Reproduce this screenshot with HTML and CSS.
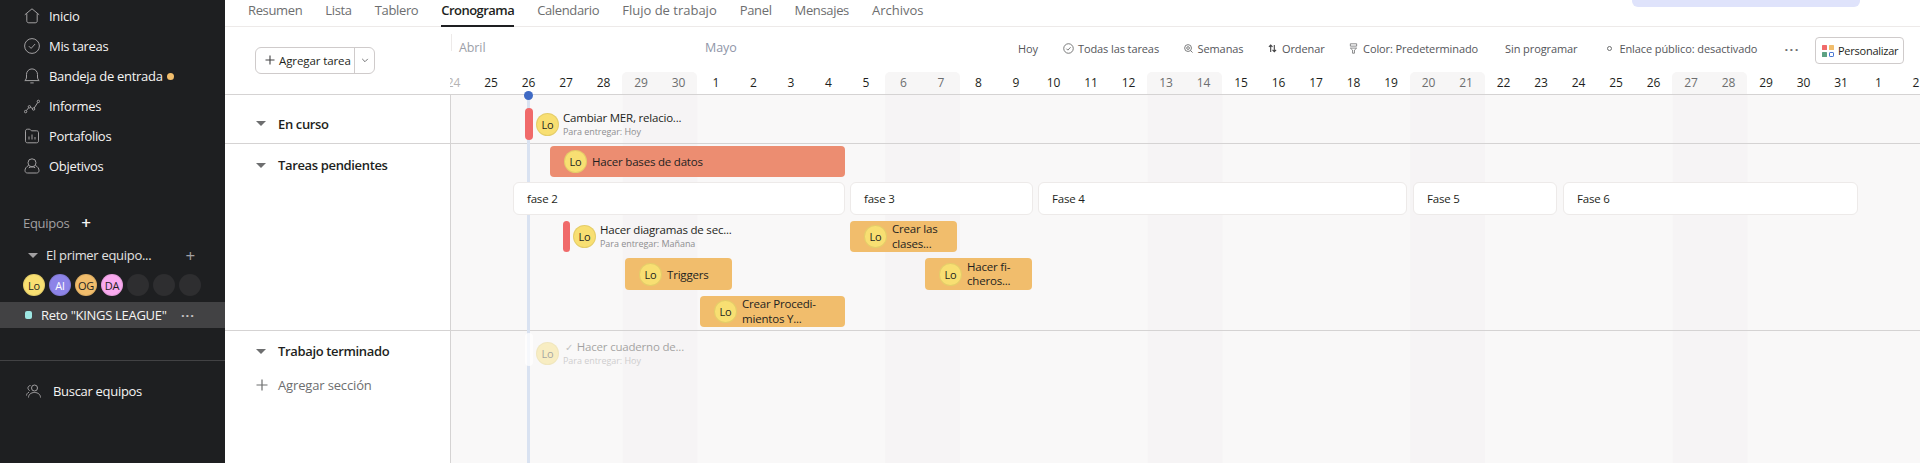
FILE: index.html
```html
<!DOCTYPE html>
<html lang="es">
<head>
<meta charset="utf-8">
<title>Reto KINGS LEAGUE - Cronograma</title>
<link rel="stylesheet" href="styles.css">
</head>
<body>
<div class="app">
  <aside class="side">
    <nav class="nav">
      <a class="nav-item"><svg class="ni" viewBox="0 0 16 16"><path d="M.8 6.800 8 .8l7.200 6M2.800 5.400v7.400c0 1.400.7 2 2 2h6.400c1.300 0 2-.6 2-2V5.400"/></svg>Inicio</a>
      <a class="nav-item"><svg class="ni" viewBox="0 0 16 16"><circle cx="8" cy="8" r="7.400"/><path d="m4.900 8.200 2.200 2.200 4-4.400"/></svg>Mis tareas</a>
      <a class="nav-item"><svg class="ni" viewBox="0 0 16 16"><path d="M.8 12.600c1-.8 1.700-2 1.700-3.600V6.400a5.500 5.500 0 0 1 11 0V9c0 1.600.7 2.800 1.700 3.600zM6.300 14.900h3.400"/></svg>Bandeja de entrada<span class="dot-note"></span></a>
      <a class="nav-item"><svg class="ni" viewBox="0 0 16 16"><circle cx="1.600" cy="13.600" r="1.200"/><circle cx="5.400" cy="8.800" r="1.200"/><circle cx="9.600" cy="11" r="1.200"/><circle cx="14.400" cy="3.400" r="1.200"/><path d="m2.400 12.600 2.200-2.800M6.500 9.400l2 1M10.200 10l3.600-5.600"/></svg>Informes</a>
      <a class="nav-item"><svg class="ni" viewBox="0 0 16 16"><path d="M1.500 3.200C1.500 1.900 2.200 1.200 3.500 1.200h2.300l1.600 1.600h5.100c1.300 0 2 .7 2 2v8c0 1.300-.7 2-2 2h-9c-1.300 0-2-.7-2-2z"/><path d="M5 11.500V8.500M8 11.500V6.500M11 11.500V9"/></svg>Portafolios</a>
      <a class="nav-item"><svg class="ni" viewBox="0 0 16 16"><circle cx="8" cy="4.800" r="4"/><path d="M4.500 7.500C2.300 8.700 1 10.500 1 12.500c0 1.500.9 2.500 2.500 2.500h9c1.600 0 2.500-1 2.500-2.500 0-2-1.300-3.800-3.500-5"/><path d="M4.800 9.800c1.800-1.200 4.600-1.200 6.400 0"/></svg>Objetivos</a>
    </nav>
    <div class="teams-head"><span>Equipos</span><span class="plus-w">+</span></div>
    <div class="team-row"><span class="tri tri-side"></span><span class="team-name">El primer equipo...</span><span class="team-plus">+</span></div>
    <div class="team-avatars">
      <span class="av av-y">Lo</span><span class="av av-p">Al</span><span class="av av-o">OG</span><span class="av av-k">DA</span><span class="av av-e"></span><span class="av av-e"></span><span class="av av-e"></span>
    </div>
    <div class="project"><span class="swatch"></span><span class="project-name">Reto "KINGS LEAGUE"</span><span class="project-dots">···</span></div>
    <div class="side-foot"><svg class="nf" viewBox="0 0 16 14"><circle cx="8.500" cy="4" r="3"/><path d="M2.500 13.500c0-3 2.500-5 6-5s6 2 6 5M4.500 1.500C2.700 1.700 1.700 3 2 4.500c.2 1 .8 1.700 1.700 2.100M.5 11.500c.1-1.500 1-2.800 2.500-3.300"/></svg>Buscar equipos</div>
  </aside>

  <main class="main">
    <div class="tabs-bar">
      <div class="tabs">
        <a class="tab">Resumen</a><a class="tab">Lista</a><a class="tab">Tablero</a><a class="tab tab-on">Cronograma</a><a class="tab">Calendario</a><a class="tab tab-wide">Flujo de trabajo</a><a class="tab">Panel</a><a class="tab">Mensajes</a><a class="tab tab-wide">Archivos</a>
      </div>
      <div class="trial"></div>
    </div>

    <div class="board">
      <div class="today-line"></div>
      <span class="today-dot"></span>
      <div class="row row-head">
        <div class="label label-head">
          <div class="add-btn"><span class="add-main"><span class="add-plus"><svg viewBox="0 0 10 10"><path d="M5 .5v9M.5 5h9"/></svg></span>Agregar tarea</span><span class="add-caret"><svg viewBox="0 0 10 6"><path d="m1.500 1 3.500 3.500L8.500 1"/></svg></span></div>
        </div>
        <div class="track track-head">
          <div class="head-top">
            <span class="month month-a">Abril</span><span class="month month-m">Mayo</span>
            <div class="tools">
              <span class="tool t-hoy">Hoy</span>
              <span class="tool t-all"><svg class="ti" viewBox="0 0 12 12"><circle cx="6" cy="6" r="5.200"/><path d="m3.700 6.200 1.600 1.600 3-3.200"/></svg>Todas las tareas</span>
              <span class="tool t-sem"><svg class="ti ti-s" viewBox="0 0 10 10"><circle cx="4.500" cy="4.500" r="3.800"/><circle cx="4.500" cy="4.500" r="1.500"/><path d="m7.300 7.300 2.200 2.200"/></svg>Semanas</span>
              <span class="tool t-ord"><svg class="ti ti-s ti-d" viewBox="0 0 10 10"><path d="M3 9V1.500M1 3.200 3 1.200l2 2M7 1v7.500M5 6.600l2 2 2-2"/></svg>Ordenar</span>
              <span class="tool t-col"><svg class="ti ti-s" viewBox="0 0 10 14"><path d="M1 1h8v3H1zM1 6.500h8L6.200 9v4H3.800V9z"/></svg>Color: Predeterminado</span>
              <span class="tool t-sin">Sin programar</span>
              <span class="tool t-enl"><span class="ring"></span>Enlace público: desactivado</span>
              <span class="tool t-dots">···</span>
              <span class="custom"><svg class="ci" viewBox="0 0 12 12"><rect width="5" height="5" rx=".6" fill="#f06a6a"/><rect x="7" width="5" height="5" rx=".6" fill="#f1bd6c"/><rect y="7" width="5" height="5" rx=".6" fill="#5da283"/><rect x="7.500" y="7.500" width="4" height="4" rx=".6" fill="#fff" stroke="#4573d2"/></svg>Personalizar</span>
            </div>
          </div>
          <div class="days">
            <span class="day day-faded">24</span><span class="day">25</span><span class="day">26</span><span class="day">27</span><span class="day">28</span><span class="day wk">29</span><span class="day wk">30</span>
            <span class="day">1</span><span class="day">2</span><span class="day">3</span><span class="day">4</span><span class="day">5</span><span class="day wk">6</span><span class="day wk">7</span>
            <span class="day">8</span><span class="day">9</span><span class="day">10</span><span class="day">11</span><span class="day">12</span><span class="day wk">13</span><span class="day wk">14</span>
            <span class="day">15</span><span class="day">16</span><span class="day">17</span><span class="day">18</span><span class="day">19</span><span class="day wk">20</span><span class="day wk">21</span>
            <span class="day">22</span><span class="day">23</span><span class="day">24</span><span class="day">25</span><span class="day">26</span><span class="day wk">27</span><span class="day wk">28</span>
            <span class="day">29</span><span class="day">30</span><span class="day">31</span><span class="day">1</span><span class="day">2</span>
          </div>
        </div>
      </div>

      <div class="row row-curso">
        <div class="label"><span class="tri"></span><span class="sec-name">En curso</span></div>
        <div class="track">
          <div class="mini" style="left:75px;top:13px;width:8px;height:32px"></div>
          <div class="mini-task" style="left:86px;top:13px">
            <span class="av av-y av-t">Lo</span>
            <div class="mini-text"><div class="mt">Cambiar MER, relacio...</div><div class="ms">Para entregar: Hoy</div></div>
          </div>
        </div>
      </div>

      <div class="row row-pend">
        <div class="label"><span class="tri"></span><span class="sec-name">Tareas pendientes</span></div>
        <div class="track">
          <div class="bar bar-red" style="left:100px;top:2px;width:295px;height:31px"><span class="av av-y av-t">Lo</span><span class="bar-t">Hacer bases de datos</span></div>
          <div class="phase" style="left:63px;width:332px">fase 2</div>
          <div class="phase" style="left:400px;width:183px">fase 3</div>
          <div class="phase" style="left:588px;width:369px">Fase 4</div>
          <div class="phase" style="left:963px;width:144px">Fase 5</div>
          <div class="phase" style="left:1113px;width:295px">Fase 6</div>

          <div class="mini" style="left:113px;top:77px;width:7px;height:31px"></div>
          <div class="mini-task" style="left:123px;top:76px">
            <span class="av av-y av-t">Lo</span>
            <div class="mini-text"><div class="mt">Hacer diagramas de sec...</div><div class="ms">Para entregar: Mañana</div></div>
          </div>
          <div class="bar bar-o" style="left:400px;top:77px;width:107px;height:31px"><span class="av av-y av-t">Lo</span><span class="bar-t bar-t2">Crear las<br>clases...</span></div>
          <div class="bar bar-o" style="left:175px;top:114px;width:107px;height:32px"><span class="av av-y av-t">Lo</span><span class="bar-t">Triggers</span></div>
          <div class="bar bar-o" style="left:475px;top:114px;width:107px;height:32px"><span class="av av-y av-t">Lo</span><span class="bar-t bar-t2">Hacer fi-<br>cheros...</span></div>
          <div class="bar bar-o" style="left:250px;top:152px;width:145px;height:31px"><span class="av av-y av-t">Lo</span><span class="bar-t bar-t2">Crear Procedi-<br>mientos Y...</span></div>
        </div>
      </div>

      <div class="row row-done">
        <div class="label label-done">
          <div class="sec-line"><span class="tri"></span><span class="sec-name">Trabajo terminado</span></div>
          <div class="sec-add"><span class="sec-plus"><svg viewBox="0 0 12 12"><path d="M6 .5v11M.5 6h11"/></svg></span>Agregar sección</div>
        </div>
        <div class="track">
          <div class="ghost" style="left:75px;top:2px;width:8px;height:33px"></div>
          <div class="mini-task mini-done" style="left:86px;top:6px">
            <span class="av av-y av-t">Lo</span>
            <div class="mini-text"><div class="mt"><span class="chk">✓</span>Hacer cuaderno de...</div><div class="ms">Para entregar: Hoy</div></div>
          </div>
        </div>
      </div>
    </div>
  </main>
</div>
</body>
</html>
```
FILE: styles.css
```css
* { box-sizing: border-box; }
html, body { margin: 0; height: 100%; overflow: hidden; }
body { font-family: "Open Sans", "Noto Sans", sans-serif; font-size: 13px; color: #1e1f21; background: #fff; }
.app { display: flex; height: 463px; width: 1920px; }

/* sidebar */
.side { width: 225px; flex: none; background: #1e1f21; color: #f5f4f3; display: flex; flex-direction: column; }
.nav { display: flex; flex-direction: column; margin-top: 1px; }
.nav-item { display: flex; align-items: center; height: 30px; padding-left: 24px; font-size: 13px; letter-spacing: -.3px; }
.ni { width: 16px; height: 16px; margin-right: 9px; fill: none; stroke: #a2a0a2; stroke-width: 1; flex: none; }
.dot-note { width: 7px; height: 7px; border-radius: 50%; background: #f1bd6c; margin-left: 4px; }
.teams-head { display: flex; align-items: center; margin-top: 32px; height: 20px; padding-left: 23px; color: #a2a0a2; font-size: 13px; letter-spacing: -.3px; }
.plus-w { color: #f5f4f3; font-size: 17px; font-weight: 600; margin-left: 12px; line-height: 20px; }
.team-row { display: flex; align-items: center; height: 24px; margin-top: 10px; padding-left: 28px; font-size: 13px; letter-spacing: -.3px; color: #e2e1e0; }
.tri { width: 0; height: 0; border-left: 5px solid transparent; border-right: 5px solid transparent; border-top: 5px solid #6d6e6f; flex: none; }
.tri-side { border-top-color: #a2a0a2; margin-right: 8px; }
.team-name { flex: 1; }
.team-plus { color: #a2a0a2; font-size: 17px; margin-right: 30px; }
.team-avatars { display: flex; gap: 4px; padding-left: 23px; margin-top: 6px; height: 24px; align-items: center; }
.av { width: 22px; height: 22px; border-radius: 50%; display: flex; align-items: center; justify-content: center; font-size: 11px; letter-spacing: -.2px; color: #1e1f21; flex: none; box-shadow: inset 0 0 0 1px rgba(0,0,0,.08); }
.av-y { background: #f8df72; }
.av-p { background: #8d84e8; color: #fff; }
.av-o { background: #f1bd6c; }
.av-k { background: #f9aaef; }
.av-e { background: #2e2e30; box-shadow: none; }
.av-t { width: 23px; height: 23px; }
.project { display: flex; align-items: center; height: 26px; background: #424244; margin-top: 5px; padding-left: 25px; font-size: 13px; letter-spacing: -.3px; }
.swatch { width: 7px; height: 8px; border-radius: 2px; background: #9ee7e3; margin-right: 9px; flex: none; }
.project-name { flex: 1; white-space: nowrap; }
.project-dots { color: #c7c4c4; font-size: 13px; margin-right: 30px; letter-spacing: 1px; font-weight: 700; }
.side-foot { display: flex; align-items: center; margin-top: 32px; border-top: 1px solid #424244; padding: 15px 0 0 26px; height: 45px; font-size: 13px; letter-spacing: -.3px; }
.nf { width: 16px; height: 14px; fill: none; stroke: #a2a0a2; stroke-width: 1; margin-right: 11px; }

/* tabs */
.main { flex: 1; min-width: 0; display: flex; flex-direction: column; }
.tabs-bar { height: 27px; border-bottom: 1px solid #edeae9; position: relative; flex: none; }
.tabs { display: flex; gap: 23px; padding-left: 23px; height: 26px; }
.tab { color: #6d6e6f; font-size: 13px; line-height: 20px; height: 27px; white-space: nowrap; letter-spacing: -.35px; }
.tab-wide { letter-spacing: 0; }
.tab-on { color: #1e1f21; font-weight: 600; border-bottom: 2px solid #1e1f21; letter-spacing: -.55px; }
.trial { position: absolute; left: 1407px; top: 0; width: 228px; height: 7px; background: #dfe3fb; border-radius: 0 0 6px 6px; }

/* board rows */
.board { flex: 1; position: relative; display: flex; flex-direction: column; overflow: hidden; }
.today-line { position: absolute; left: 302px; top: 67px; bottom: 0; width: 3px; background: #d9e2f1; z-index: 1; }
.today-dot { position: absolute; left: 299px; top: 64px; width: 9px; height: 9px; border-radius: 50%; background: #3f6ac4; z-index: 2; }
.row { display: flex; flex: none; }
.row-head { height: 68px; border-bottom: 1px solid #d5d3d3; }
.row-curso { height: 49px; border-bottom: 1px solid #d5d3d3; }
.row-pend { height: 187px; border-bottom: 1px solid #d5d3d3; }
.row-done { flex: 1; }
.label { width: 225px; flex: none; display: flex; align-items: center; padding-left: 31px; background: #fff; }
.label-head { padding-left: 30px; padding-bottom: 1px; }
.row-curso .label { padding-top: 9px; }
.row-pend .label { align-items: flex-start; padding-top: 11px; }
.label-done { flex-direction: column; align-items: flex-start; padding-top: 9px; }
.sec-line { display: flex; align-items: center; height: 22px; }
.sec-name { font-weight: 600; font-size: 13px; letter-spacing: -.35px; color: #1e1f21; margin-left: 12px; line-height: 20px; }
.row-pend .tri { margin-top: 8px; }
.sec-add { display: flex; align-items: center; color: #6d6e6f; margin-top: 14px; font-size: 13px; letter-spacing: -.15px; }
.sec-plus { width: 12px; height: 12px; margin-right: 10px; display: flex; }
.sec-plus svg { width: 12px; height: 12px; fill: none; stroke: #6d6e6f; stroke-width: 1.200; }

/* add button */
.add-btn { display: flex; height: 27px; width: 120px; border: 1px solid #cfcbcb; border-radius: 6px; font-size: 11.500px; letter-spacing: -.1px; color: #1e1f21; }
.add-main { width: 99px; display: flex; align-items: center; padding-left: 9px; border-right: 1px solid #cfcbcb; white-space: nowrap; }
.add-plus { width: 10px; height: 10px; margin-right: 4px; display: flex; }
.add-plus svg { width: 10px; height: 10px; fill: none; stroke: #424244; stroke-width: 1.100; }
.add-caret { flex: 1; display: flex; align-items: center; justify-content: center; }
.add-caret svg { width: 8px; height: 5px; fill: none; stroke: #6d6e6f; stroke-width: 1.200; }

/* timeline */
.track { flex: 1; min-width: 0; position: relative; box-shadow: inset 1px 0 0 #d5d3d3; background-color: #f9f8f8;
  background-image: linear-gradient(90deg, transparent 187.500px, #f6f4f5 187.500px);
  background-size: 262.500px 100%; background-position: -15px 0; }
.track-head { background: #fff; box-shadow: none; display: flex; flex-direction: column; overflow: hidden; }
.head-top { height: 45px; display: flex; align-items: center; position: relative; padding-bottom: 2px; }
.head-top::before { content: ""; position: absolute; left: 1px; top: 7px; width: 1px; height: 17px; background: #edeae9; }
.month { font-size: 12.500px; color: #9ca0a8; flex: none; position: relative; top: -1px; letter-spacing: -.1px; }
.month-a { margin-left: 9px; width: 246px; }
.month-m { color: #8f96a8; }
.tools { margin-left: auto; display: flex; align-items: center; font-size: 11px; color: #55565a; white-space: nowrap; padding-right: 16px; letter-spacing: -.1px; }
.tool { display: flex; align-items: center; }
.ti { width: 11px; height: 11px; fill: none; stroke: #6d6e6f; stroke-width: 1; margin-right: 4px; flex: none; }
.ti-s { width: 9px; margin-right: 5px; }
.ti-d { stroke: #424244; stroke-width: 1.200; }
.t-hoy { margin-right: 25px; }
.t-all { margin-right: 24.500px; }
.t-sem { margin-right: 24.500px; }
.t-ord { margin-right: 24.500px; }
.t-col { margin-right: 27px; }
.t-sin { margin-right: 30px; }
.t-enl { margin-right: 27px; }
.t-dots { margin-right: 15px; font-weight: 700; font-size: 13px; letter-spacing: 1.500px; color: #6d6e6f; }
.ring { width: 5px; height: 5px; border: 1px solid #6d6e6f; border-radius: 50%; margin-right: 7px; }
.custom { display: flex; align-items: center; width: 89px; height: 27px; border: 1px solid #cfcbcb; border-radius: 4px; padding-left: 6px; color: #1e1f21; position: relative; top: 2px; background: #fff; letter-spacing: -.25px; }
.ci { width: 12px; height: 12px; margin-right: 4px; flex: none; }
.days { display: flex; height: 22px; margin-left: -15.300px; width: 1500px; flex: none; }
.day { width: 37.500px; flex: none; text-align: center; line-height: 22px; font-size: 12px; color: #1e1f21; letter-spacing: -.2px; }
.day.wk { background: #f7f6f6; color: #6d6e6f; }
.day.wk:nth-child(7n+6) { border-radius: 5px 0 0 0; }
.day.wk:nth-child(7n+7) { border-radius: 0 5px 0 0; }
.day-faded { color: #b5b3b3; }

/* tasks */
.mini { position: absolute; background: #f06a6a; border-radius: 4px; z-index: 2; }
.ghost { position: absolute; background: rgba(255,255,255,.75); border-radius: 4px; z-index: 2; }
.mini-task { position: absolute; display: flex; align-items: flex-start; z-index: 2; gap: 4px; }
.mini-task .av { margin-top: 5px; }
.mini-text { padding-top: 2px; }
.mt { font-size: 11.500px; line-height: 16px; letter-spacing: -.2px; color: #1e1f21; white-space: nowrap; }
.ms { font-size: 9px; line-height: 11px; color: #8e8e90; white-space: nowrap; letter-spacing: -.05px; }
.mini-done { opacity: .4; }
.chk { margin: 0 4px 0 2px; color: #6d6e6f; font-size: 10px; }
.bar { position: absolute; display: flex; align-items: center; border-radius: 4px; padding-left: 14px; z-index: 2; }
.bar .av { margin-right: 5px; }
.bar-red { background: #ec8d71; }
.bar-o { background: #f1bd6c; }
.bar-t { font-size: 11.500px; letter-spacing: -.2px; white-space: nowrap; line-height: 15px; }
.bar-t2 { line-height: 14.500px; }
.phase { position: absolute; top: 38px; height: 33px; background: #fff; border: 1px solid #edeae9; border-radius: 6px; font-size: 11.500px; letter-spacing: -.2px; line-height: 31px; padding-left: 13px; z-index: 2; }
```
